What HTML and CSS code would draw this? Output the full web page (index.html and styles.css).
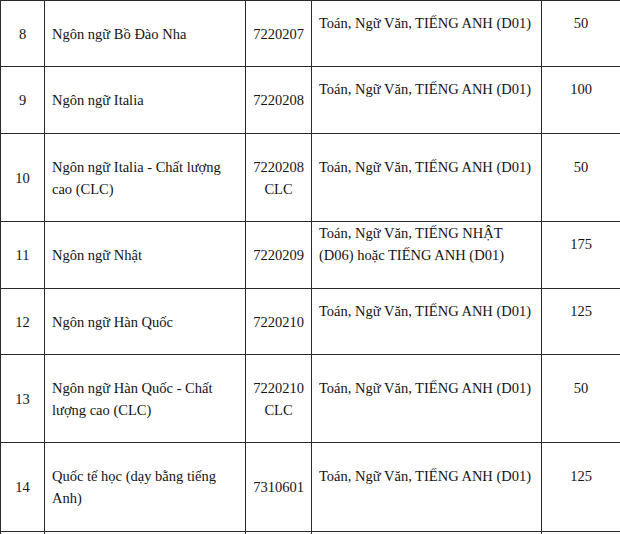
FILE: index.html
```html
<!DOCTYPE html>
<html lang="vi">
<head>
<meta charset="utf-8">
<link rel="stylesheet" href="styles.css">
</head>
<body>
<table class="grid">
  <colgroup>
    <col class="c-no"><col class="c-name"><col class="c-code"><col class="c-subj"><col class="c-qty">
  </colgroup>
  <tbody>
    <tr class="r66">
      <td class="center">8</td>
      <td class="left">Ngôn ngữ Bồ Đào Nha</td>
      <td class="center">7220207</td>
      <td class="left extra">Toán, Ngữ Văn, TIẾNG ANH (D01)</td>
      <td class="center extra">50</td>
    </tr>
    <tr class="r67">
      <td class="center">9</td>
      <td class="left">Ngôn ngữ Italia</td>
      <td class="center">7220208</td>
      <td class="left extra">Toán, Ngữ Văn, TIẾNG ANH (D01)</td>
      <td class="center extra">100</td>
    </tr>
    <tr class="r88">
      <td class="center">10</td>
      <td class="left">Ngôn ngữ Italia - Chất lượng cao (CLC)</td>
      <td class="center">7220208<br>CLC</td>
      <td class="left extra">Toán, Ngữ Văn, TIẾNG ANH (D01)</td>
      <td class="center extra">50</td>
    </tr>
    <tr class="r67">
      <td class="center">11</td>
      <td class="left">Ngôn ngữ Nhật</td>
      <td class="center">7220209</td>
      <td class="left extra">Toán, Ngữ Văn, TIẾNG NHẬT (D06) hoặc TIẾNG ANH (D01)</td>
      <td class="center extra">175</td>
    </tr>
    <tr class="r66">
      <td class="center">12</td>
      <td class="left">Ngôn ngữ Hàn Quốc</td>
      <td class="center">7220210</td>
      <td class="left extra">Toán, Ngữ Văn, TIẾNG ANH (D01)</td>
      <td class="center extra">125</td>
    </tr>
    <tr class="r88">
      <td class="center">13</td>
      <td class="left">Ngôn ngữ Hàn Quốc - Chất lượng cao (CLC)</td>
      <td class="center">7220210<br>CLC</td>
      <td class="left extra">Toán, Ngữ Văn, TIẾNG ANH (D01)</td>
      <td class="center extra">50</td>
    </tr>
    <tr class="r89">
      <td class="center">14</td>
      <td class="left">Quốc tế học (dạy bằng tiếng Anh)</td>
      <td class="center">7310601</td>
      <td class="left extra">Toán, Ngữ Văn, TIẾNG ANH (D01)</td>
      <td class="center extra">125</td>
    </tr>
    <tr class="r66">
      <td class="center"></td>
      <td class="left"></td>
      <td class="center"></td>
      <td class="left"></td>
      <td class="center"></td>
    </tr>
  </tbody>
</table>
</body>
</html>
```

FILE: styles.css
```css
html, body {
  margin: 0;
  padding: 0;
  background: #ffffff;
  overflow: hidden;
}

.grid {
  border-collapse: collapse;
  table-layout: fixed;
  width: 620px;
  font-family: "Liberation Serif", "Times New Roman", serif;
  font-size: 14.5px;
  line-height: 22px;
  color: #141414;
}

.c-no { width: 44px; }
.c-name { width: 201px; }
.c-code { width: 66px; }
.c-subj { width: 230px; }
.c-qty { width: 79px; }

.grid td {
  border: 1px solid #2b2b2b;
  padding: 0 7px;
  vertical-align: middle;
}

.grid td.center { text-align: center; padding: 0 2px; }
.grid td.left { text-align: left; }
.grid td.extra { padding-bottom: 22px; }

.r66 td { height: 65px; }
.r67 td { height: 66px; }
.r88 td { height: 87px; }
.r89 td { height: 88px; }
.r66 td.extra { height: 43px; }
.r67 td.extra { height: 44px; }
.r88 td.extra { height: 65px; }
.r89 td.extra { height: 66px; }
```
